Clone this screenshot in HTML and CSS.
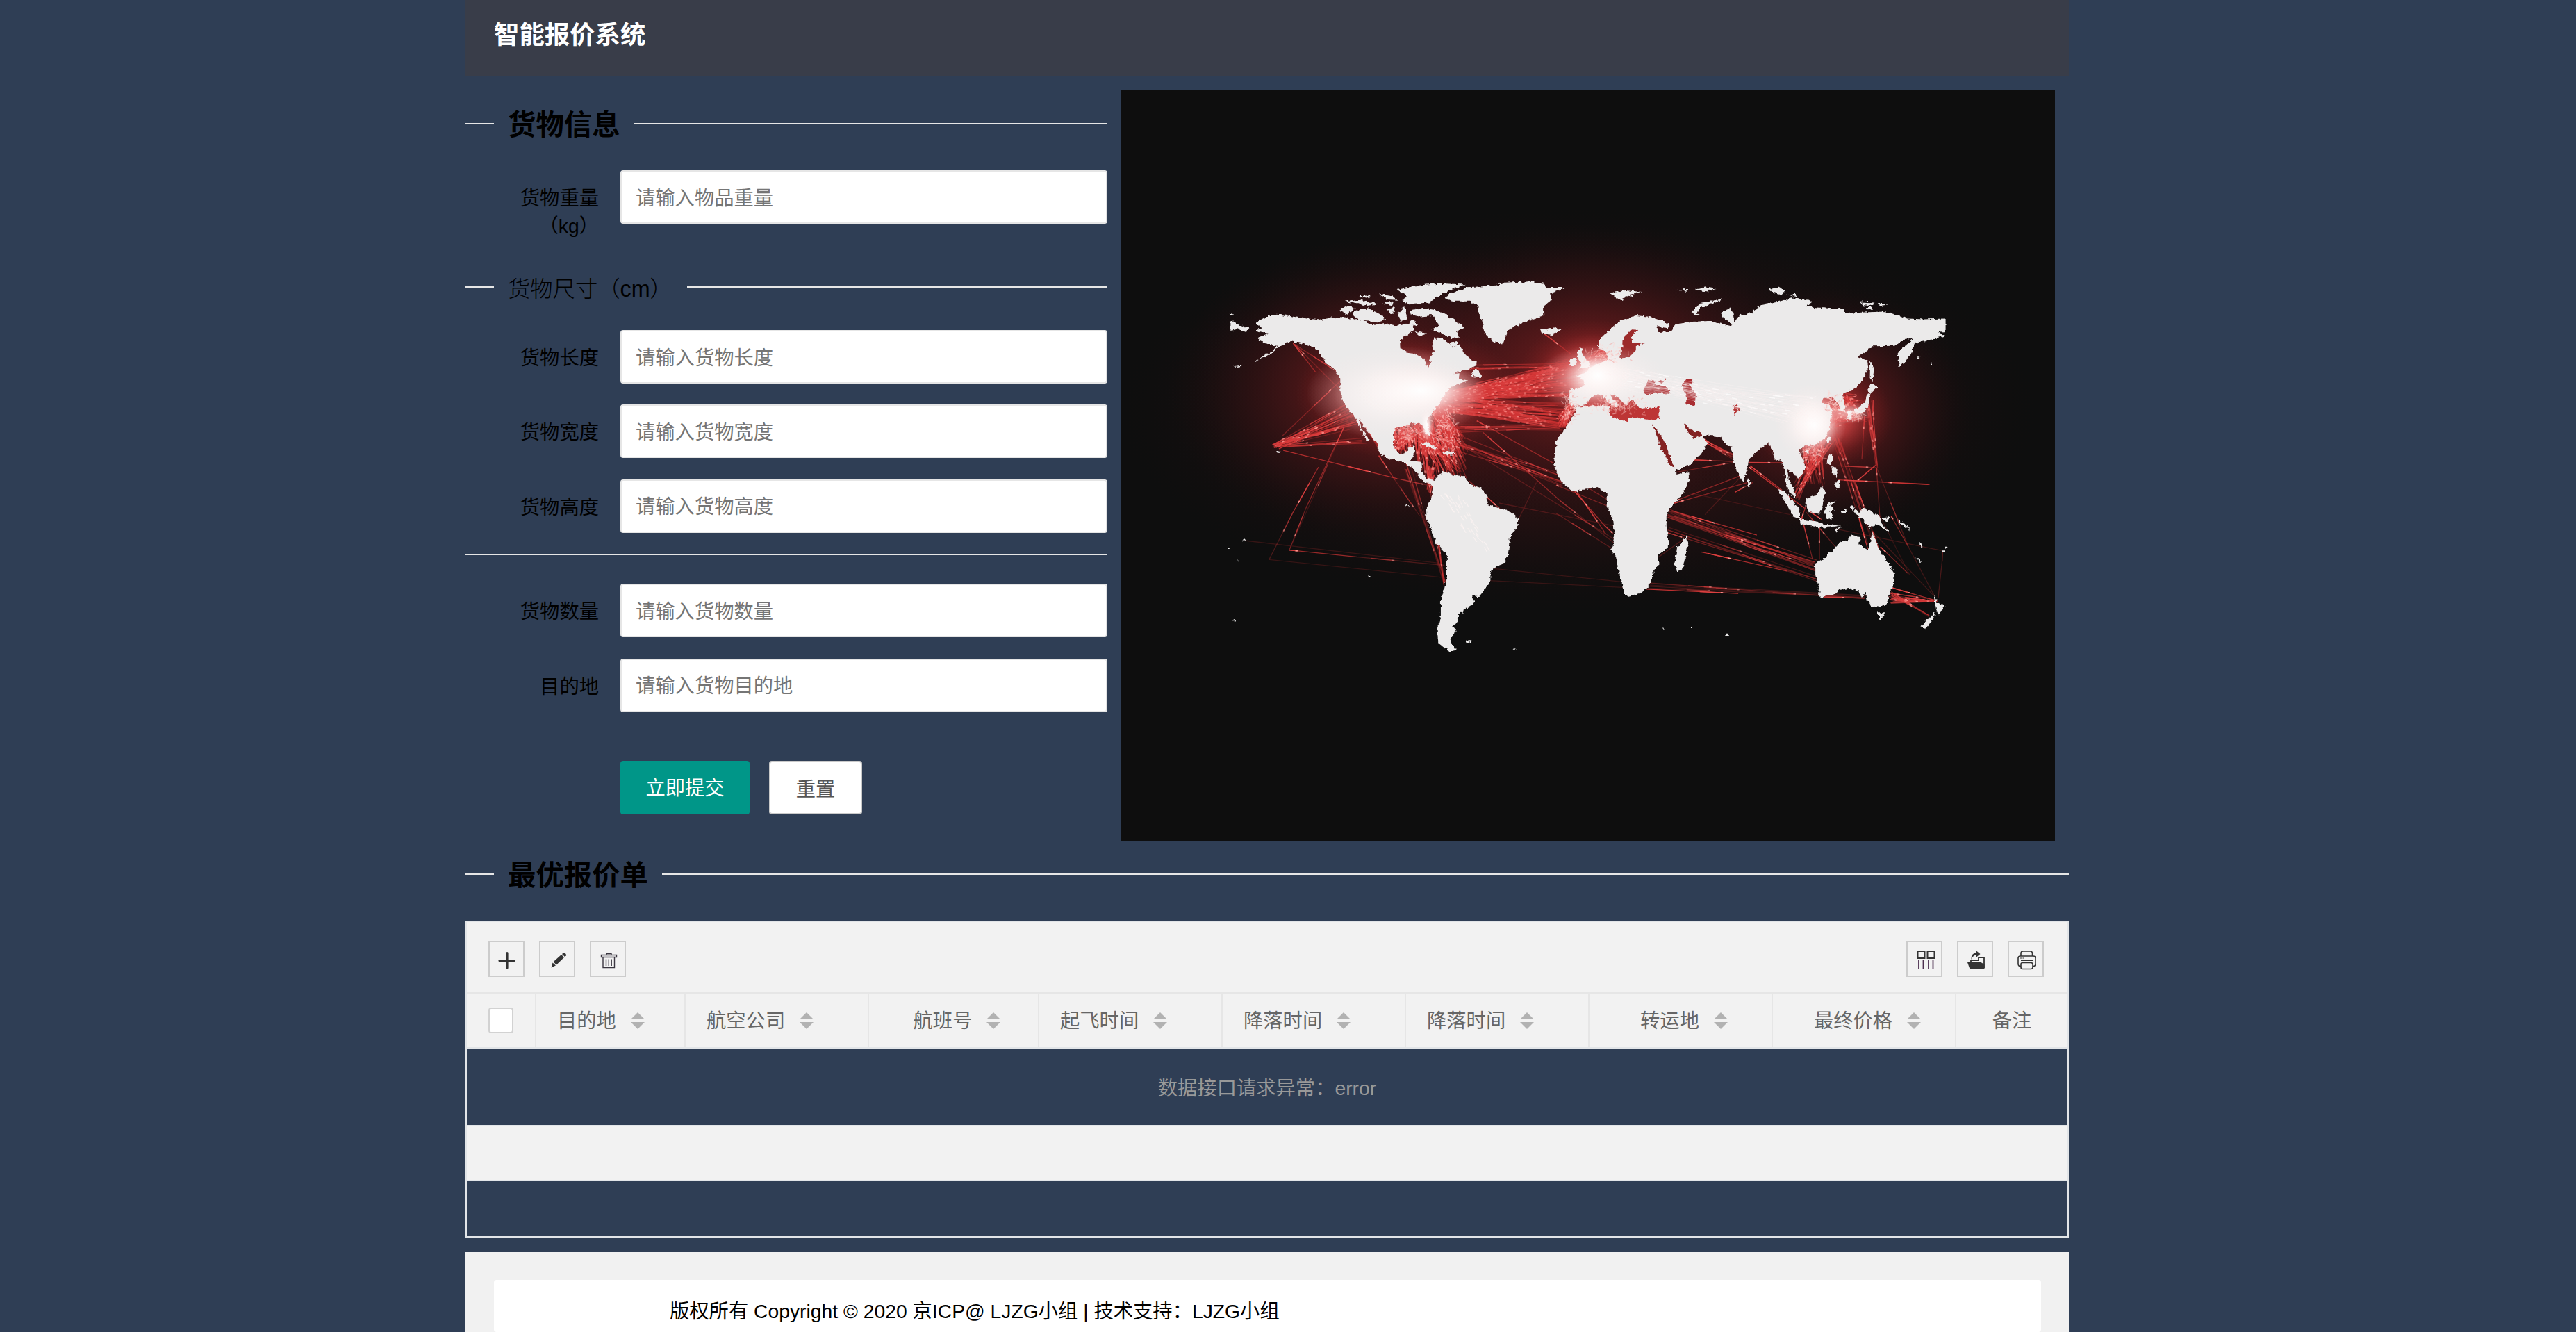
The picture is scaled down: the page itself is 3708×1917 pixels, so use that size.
FILE: index.html
```html
<!DOCTYPE html>
<html lang="zh-CN">
<head>
<meta charset="utf-8">
<title>智能报价系统</title>
<link rel="stylesheet" href="styles.css">
</head>
<body>
<div class="page">
  <header class="header"><h1 class="logo">智能报价系统</h1></header>

  <main class="top">
    <form class="form">
      <div class="legend legend-main"><h2 class="title">货物信息</h2></div>
      <div class="row row-weight"><label class="label">货物重量（kg）</label><input class="input" placeholder="请输入物品重量"></div>
      <div class="legend legend-size"><span class="subtitle">货物尺寸（cm）</span></div>
      <div class="row"><label class="label">货物长度</label><input class="input" placeholder="请输入货物长度"></div>
      <div class="row"><label class="label">货物宽度</label><input class="input" placeholder="请输入货物宽度"></div>
      <div class="row"><label class="label">货物高度</label><input class="input" placeholder="请输入货物高度"></div>
      <div class="divider"></div>
      <div class="row"><label class="label">货物数量</label><input class="input" placeholder="请输入货物数量"></div>
      <div class="row"><label class="label">目的地</label><input class="input" placeholder="请输入货物目的地"></div>
      <div class="actions">
        <button type="button" class="btn btn-primary">立即提交</button>
        <button type="button" class="btn btn-plain">重置</button>
      </div>
    </form>

    <svg class="map" viewBox="1614 130 1344 1081" preserveAspectRatio="none">
      <defs>
        <radialGradient id="haze"><stop offset="0" stop-color="#7a2022" stop-opacity=".9"/><stop offset=".35" stop-color="#5c191b" stop-opacity=".75"/><stop offset=".7" stop-color="#351214" stop-opacity=".45"/><stop offset="1" stop-color="#1a0d0e" stop-opacity="0"/></radialGradient>
        <radialGradient id="hot"><stop offset="0" stop-color="#ff7a74" stop-opacity="1"/><stop offset=".45" stop-color="#e04848" stop-opacity=".6"/><stop offset=".75" stop-color="#b02a2a" stop-opacity=".2"/><stop offset="1" stop-color="#902020" stop-opacity="0"/></radialGradient>
        <radialGradient id="white"><stop offset="0" stop-color="#fff" stop-opacity=".95"/><stop offset=".35" stop-color="#fff8f7" stop-opacity=".75"/><stop offset=".7" stop-color="#fff1f0" stop-opacity=".25"/><stop offset="1" stop-color="#ffecea" stop-opacity="0"/></radialGradient>
        <filter id="coast" x="0" y="0" width="1" height="1"><feTurbulence type="fractalNoise" baseFrequency=".2" numOctaves="2" seed="4"/><feDisplacementMap in="SourceGraphic" scale="6" xChannelSelector="R" yChannelSelector="G"/></filter>
      </defs>
      <rect x="1614" y="130" width="1344" height="1081" fill="#0e0e0e"/>
      <g class="haze">
        <ellipse cx="2270" cy="590" rx="660" ry="290" fill="url(#haze)" opacity=".6"/>
        <ellipse cx="2000" cy="560" rx="320" ry="220" fill="url(#haze)"/>
        <ellipse cx="2290" cy="540" rx="320" ry="220" fill="url(#haze)"/>
        <ellipse cx="2625" cy="590" rx="215" ry="180" fill="url(#haze)"/>
        <ellipse cx="2030" cy="568" rx="165" ry="95" fill="url(#hot)"/>
        <ellipse cx="2295" cy="540" rx="110" ry="80" fill="url(#hot)"/>
        <ellipse cx="2620" cy="600" rx="105" ry="78" fill="url(#hot)"/>
      </g>
      <g id="routes"></g>
      <g filter="url(#coast)">
        <rect x="1614" y="130" width="1344" height="1081" fill="none"/>
        <g class="land" transform="translate(1740 380) scale(.35714 .3699)">
          <path d="M185 258L215 250 190 228 225 208 260 197 300 198 340 205 380 210 440 217 500 208 560 210 620 222 660 238 720 232 760 240 790 232 820 236 830 255 790 280 770 300 772 328 800 345 835 350 865 365 875 390 887 402 895 380 890 362 910 340 900 310 905 288 940 290 965 305 985 325 1010 312 1030 345 1060 375 1080 378 1078 395 1045 410 1000 420 965 440 985 428 1010 425 1008 445 1045 455 1010 465 975 480 955 500 940 525 915 560 890 595 880 610 885 640 893 665 885 672 868 645 860 625 830 618 790 628 750 640 745 665 745 705 765 735 790 740 805 715 830 708 828 735 815 765 855 770 858 805 880 835 905 840 915 845 905 852 870 850 845 825 820 792 790 775 765 765 740 765 700 745 680 722 680 700 655 670 625 632 607 605 610 630 635 665 650 692 635 685 610 640 598 610 580 585 560 560 535 520 530 490 530 445 500 405 470 385 450 350 430 328 400 315 345 303 320 300 290 320 250 348 180 385 215 360 265 332 275 318 240 312 205 298 200 285 240 270Z"/>
          <path d="M1055 435L1075 405 1100 430 1100 445ZM810 180L860 170 920 180 960 200 1000 225 1030 245 1000 262 1008 285 980 290 940 270 900 255 930 240 900 200 850 205 810 195ZM580 185L640 170 690 195 715 215 680 225 620 222 585 205ZM525 180L550 162 590 170 560 195ZM760 100L830 85 920 75 1035 80 990 95 930 120 890 150 800 155 780 140 800 125ZM545 145L600 138 680 155 640 162ZM685 115L740 125 760 140 720 138ZM700 150L745 145 740 160ZM715 175L750 170 740 195ZM760 195L790 165 800 215 775 222ZM830 262L880 270 850 280ZM600 125L650 122 640 135ZM970 305L1000 300 1000 322 975 320ZM800 235L830 215 840 240Z"/>
          <path d="M948 130L985 110 1040 90 1150 85 1190 72 1290 68 1350 78 1360 92 1435 92 1375 115 1380 140 1350 165 1350 200 1270 225 1205 260 1185 312 1145 300 1110 265 1100 215 1085 190 1085 160 1050 145 980 145ZM1335 250L1365 255 1400 245 1418 258 1380 276 1345 270ZM85 222L125 238 165 250 150 265 115 252 85 260ZM83 191L105 197 88 201ZM850 700L880 692 925 722 900 715ZM940 735L965 725 995 740 960 744ZM270 724L287 728 277 735Z"/>
          <path d="M880 840L905 842 925 820 950 808 990 822 1030 825 1055 860 1100 875 1120 900 1125 935 1170 950 1215 962 1247 990 1245 1020 1215 1065 1210 1125 1190 1165 1150 1180 1135 1200 1135 1230 1110 1270 1090 1293 1058 1290 1070 1315 1060 1330 1028 1340 1025 1355 1005 1360 1005 1385 985 1410 997 1425 970 1465 1000 1502 970 1507 925 1475 920 1420 935 1370 935 1310 950 1260 960 1200 960 1130 915 1085 895 1030 878 990 876 950 900 905 905 870ZM1035 1467L1060 1465 1045 1477ZM1224 1494L1238 1500 1230 1500ZM98 398L145 392 120 400ZM790 935L808 940 795 943ZM100 1385h6v6h-6ZM643 1211h5v5h-5ZM78 1103h6v5h-6ZM136 1072h9v5h-9ZM114 1150h5v5h-5Z"/>
        </g>
        <g class="land" transform="translate(2240 380) scale(.38265 .3699)">
          <path d="M50 490L90 480 108 470 100 445 75 435 115 420 130 400 165 385 195 372 185 345 175 330 157 325 157 300 200 255 240 220 300 200 350 205 400 222 428 235 420 250 380 240 385 265 430 262 450 235 500 225 570 222 610 230 650 240 665 235 620 205 625 185 655 172 665 190 670 225 690 200 735 190 770 160 830 148 890 132 965 145 940 165 1050 175 1080 172 1090 192 1160 188 1230 185 1300 203 1320 212 1385 215 1465 212 1465 262 1440 265 1460 280 1420 292 1345 310 1335 350 1300 395 1290 398 1285 350 1300 330 1345 290 1310 295 1270 318 1190 320 1135 362 1170 375 1175 410 1150 455 1120 485 1085 500 1075 520 1090 545 1085 570 1065 570 1060 540 1040 520 1005 518 1000 540 1030 550 1040 570 1030 610 1030 640 1010 680 970 705 935 710 915 720 920 745 938 775 935 810 910 838 895 815 870 800 875 840 895 880 900 912 885 900 865 855 860 800 845 760 825 765 800 695 770 715 725 760 718 800 705 848 690 830 670 780 665 740 660 710 640 705 620 672 550 665 568 700 545 740 510 775 450 803 450 822 500 808 502 830 480 890 435 940 415 980 415 1020 423 1060 423 1100 385 1135 385 1170 365 1195 350 1250 320 1280 270 1292 255 1285 253 1260 235 1200 225 1140 207 1110 220 1055 215 1000 190 940 190 890 155 868 120 875 60 885 25 850 0 810 -8 770 0 690 45 620 75 570 65 552 50 545Z"/>
          <path d="M85 325L105 330 95 350 120 380 130 400 85 408 95 385 80 360ZM50 375L75 362 75 395 50 395ZM508 190L540 155 600 140 632 135 590 152 550 168 530 190 540 200ZM200 112L260 103 320 108 280 118 300 132 265 125 240 140ZM800 98L835 90 862 105 850 118 815 110ZM868 120L900 113 905 128ZM1145 147L1195 150 1190 162 1155 160ZM1210 152L1247 158 1220 162ZM1166 171L1190 169 1185 182ZM455 98L500 97 490 105ZM520 101L560 90 605 97 570 107Z"/>
          <path d="M1182 370L1195 415 1190 460 1180 440ZM1168 494L1188 463 1207 478 1185 500ZM1182 500L1174 555 1150 580 1100 590 1092 575 1130 562 1160 540 1172 505ZM1095 590L1110 585 1107 607 1097 605ZM1025 668L1034 675 1027 700 1018 690ZM930 725L952 720 945 742ZM1023 740L1038 743 1037 780 1018 775ZM1043 857L1065 838 1068 865 1055 875ZM1035 785L1060 800 1055 830 1040 815ZM940 915L975 900 1000 865 1012 885 1002 940 992 972 950 965 940 940ZM833 876L862 885 892 925 918 960 917 992 890 982 855 910ZM915 993L960 998 1005 1013 1070 1018 1000 1027 920 1012ZM1018 935L1057 918 1030 940 1048 955 1033 962 1042 987 1018 992 1010 965ZM1103 938L1125 942 1117 955 1140 965 1160 948 1215 980 1225 1010 1252 1042 1200 1012 1180 1030 1160 1000 1133 977ZM1220 990L1257 983 1240 1002ZM1282 988L1310 1010 1335 1038 1300 1012ZM718 832L733 850 725 870ZM490 1058L497 1085 475 1190 455 1195 445 1165 455 1100 475 1085ZM1070 960L1095 960 1090 968 1070 968ZM1048 1035L1075 1020 1055 1042Z"/>
          <path d="M975 1165L1010 1145 1045 1110 1075 1075 1095 1080 1110 1055 1145 1060 1140 1090 1172 1112 1180 1095 1188 1042 1215 1110 1245 1155 1272 1200 1270 1245 1250 1300 1240 1328 1215 1335 1185 1330 1170 1305 1165 1275 1150 1300 1140 1272 1105 1262 1065 1268 1045 1285 1000 1297 988 1290 990 1265 975 1210ZM1205 1355L1237 1355 1222 1387ZM1420 1288L1440 1320 1462 1328 1440 1364 1430 1345ZM1427 1353L1417 1385 1390 1417 1373 1409 1400 1380ZM1353 1141L1378 1162 1370 1162ZM1453 1112h10v8h-10ZM1462 1102h9v5h-9ZM636 1440h14v6h-14ZM506 1411h5v5h-5ZM401 1417h5v5h-5ZM1370 1085h5v18h-5ZM1358 360h9v7h-9ZM1406 385h9v8h-9Z"/>
        </g>
        <g class="sea" transform="translate(2240 380) scale(.38265 .3699)">
          <path d="M250 290L285 255 307 256 280 285 290 308 337 306 300 320 300 335 275 362 240 366 248 335Z" fill="#9c2a2b"/>
          <path d="M70 556L112 548 125 525 150 508 172 512 205 548 225 555 240 550 205 512 215 505 258 545 268 552 275 535 292 530 305 555 325 562 386 555 385 603 350 606 278 595 268 614 238 605 200 587 195 550 130 552Z" fill="#bd3435"/>
          <path d="M328 490L350 452 370 455 365 472 395 470 430 490 425 505 385 500 340 507ZM383 462L410 444 402 464ZM470 470L490 448 517 448 510 465 497 468 525 505 522 550 490 545 488 510Z" fill="#a92e30"/>
          <path d="M663 555L680 547 694 565 682 570 672 587Z" fill="#b53436"/>
          <path d="M480 620L500 635 520 655 540 653 548 665 520 682 500 660ZM362 625L385 650 415 710 445 795 430 785 395 715Z" fill="#832324"/>
        </g>
      </g>
      <g class="glow">
        <ellipse cx="2010" cy="566" rx="130" ry="68" fill="url(#white)" opacity=".8"/>
        <ellipse cx="2045" cy="562" rx="95" ry="42" fill="url(#white)"/>
        <ellipse cx="2054" cy="612" rx="10" ry="26" fill="url(#white)"/>
        <ellipse cx="2306" cy="546" rx="95" ry="50" fill="url(#white)" opacity=".8"/>
        <ellipse cx="2300" cy="540" rx="48" ry="36" fill="url(#white)"/>
        <ellipse cx="2606" cy="608" rx="52" ry="56" fill="url(#white)"/>
        <ellipse cx="2612" cy="612" rx="34" ry="38" fill="url(#white)" opacity=".8"/>
        <ellipse cx="2662" cy="594" rx="34" ry="16" fill="url(#white)" opacity=".6"/>
      </g>
      <g id="sparks"></g>
    </svg>
  </main>

  <section class="quotes">
    <div class="legend legend-quotes"><h2 class="title">最优报价单</h2></div>
    <div class="table">
      <div class="toolbar">
        <div class="tools">
          <span class="tool"><svg viewBox="0 0 52 52"><path d="M16 28.500H37.500M27 17.500V39" stroke="#333" stroke-width="3.200" stroke-linecap="round"/></svg></span>
          <span class="tool"><svg viewBox="0 0 52 52"><path d="M17.500 38.500L19.500 31.500 24 35.500ZM20.500 30.300L32 20 36 24 25 34.500ZM33 19L34.500 17.800Q37 16.500 38.500 19T38 22L37 23Z" fill="#333"/></svg></span>
          <span class="tool"><svg viewBox="0 0 52 52" fill="none" stroke="#3a3640"><path d="M16.500 20.500H38.500V23.500H16.500ZM19 24V38.500H35.500V24M24 20V18.500H31V20M23.500 26.500V36M27.300 26.500V36M31.200 26.500V36" stroke-width="1.400"/></svg></span>
        </div>
        <div class="tools">
          <span class="tool"><svg viewBox="0 0 52 52" fill="none" stroke="#333"><path d="M16.500 15H26.500V25H16.500ZM30.500 15H40.500V25H30.500Z" stroke-width="2"/><path d="M18 28V40M24.500 28V40M32 28V40M38.500 28V40" stroke="#4d3050" stroke-width="1.800"/></svg></span>
          <span class="tool"><svg viewBox="0 0 52 52"><path d="M20.500 27Q20 17.500 28 17.500V14.500L33.500 19 28 23.500V20.500Q23 20.500 20.500 27Z" fill="#333"/><path d="M20 32V28H31V24H39V39" fill="none" stroke="#333" stroke-width="1.800"/><path d="M15 31H34.500L39.500 34V40.500H18.500Z" fill="#333"/></svg></span>
          <span class="tool"><svg viewBox="0 0 52 52" fill="none" stroke="#333" stroke-width="1.600"><path d="M19 22V18Q19 15 22 15H32.500Q35.500 15 35.500 18V22"/><path d="M19 36.500Q15 37 15 33V25Q15 22 18 22H37Q40 22 40 25V33Q40 37 36 36.500"/><rect x="19" y="31.500" width="17" height="9" rx="2.500"/><path d="M19 28.500H36M18 25H20M21.500 25H23.500" stroke-width="1.200"/></svg></span>
        </div>
      </div>
      <div class="thead">
        <div class="th"><span class="checkbox"></span></div>
        <div class="th">目的地<i class="sort"></i></div>
        <div class="th">航空公司<i class="sort"></i></div>
        <div class="th center">航班号<i class="sort"></i></div>
        <div class="th">起飞时间<i class="sort"></i></div>
        <div class="th">降落时间<i class="sort"></i></div>
        <div class="th">降落时间<i class="sort"></i></div>
        <div class="th center">转运地<i class="sort"></i></div>
        <div class="th center">最终价格<i class="sort"></i></div>
        <div class="th center last">备注</div>
      </div>
      <div class="message">数据接口请求异常：error</div>
      <div class="total"><span class="total-cell"></span></div>
      <div class="pager"></div>
    </div>
  </section>

  <footer class="footer"><div class="card">版权所有 Copyright © 2020 京ICP@ LJZG小组 | 技术支持：LJZG小组</div></footer>
</div>
<script src="map.js"></script>
</body>
</html>
```
FILE: styles.css
```css
* { box-sizing: border-box; }
body {
  margin: 0;
  height: 1917px;
  overflow: hidden;
  background: #2f3e55;
  color: #000;
  font: 28.300px/40px "Liberation Sans", "Noto Sans CJK SC", sans-serif;
}
h1, h2 { margin: 0; }
.page { width: 2308px; margin-left: 670px; }
.header { height: 110px; padding: 26px 0 0 41px; background: #393d49; }
.logo { color: #fff; font-size: 36.400px; line-height: 50px; }

.top { display: flex; justify-content: space-between; padding: 20px 20px 0 0; }
.form { width: 924px; }
.map { display: block; width: 1344px; height: 1081px; }
.land { fill: #ebeaea; }

.legend { display: flex; align-items: center; gap: 20px; }
.legend::before, .legend::after { content: ""; height: 2px; background: #e6e6e6; }
.legend::before { width: 41px; }
.legend::after { flex: 1; }
.legend-main { height: 95px; margin-bottom: 20px; }
.legend-size { height: 62px; margin: 38px 0 31px; }
.legend-quotes { height: 56px; }
.title { font-size: 40.400px; line-height: 48px; padding-top: 4px; }
.subtitle { width: 238px; font-size: 32.300px; font-weight: 300; line-height: 40px; padding-top: 5px; white-space: nowrap; }

.row { display: flex; gap: 31px; height: 77px; margin-bottom: 30.400px; }
.row-weight { height: 99px; margin-bottom: 0; }
.label { width: 192px; padding: 20px 0 0 60px; text-align: right; }
.input {
  flex: 1;
  height: 77px;
  padding: 3px 20px 0;
  border: 2px solid #e6e6e6;
  border-radius: 4px;
  background: #fff;
  font: inherit;
}
.input::placeholder { color: #757575; opacity: 1; }
.divider { height: 2px; margin: 0 0 41px; background: #e6e6e6; }
.actions { display: flex; gap: 28px; padding: 40px 0 0 223px; }
.btn { height: 77px; border-radius: 4px; font: inherit; }
.btn-primary { width: 186px; padding-top: 3px; border: 0; background: #009688; color: #fff; }
.btn-plain { width: 134px; padding-top: 6px; border: 2px solid #c9c9c9; background: #fff; color: #555; }

.quotes { padding-top: 19px; }
.table { height: 456px; margin-top: 39px; border: 2px solid #e2e5e8; }
.toolbar { display: flex; justify-content: space-between; height: 103px; padding: 27px 34px 0 31px; border-bottom: 2px solid #e6e6e6; background: #f2f2f2; }
.tools { display: flex; gap: 21px; }
.tool { width: 52px; height: 52px; border: 2px solid #ccc; }
.tool svg { display: block; width: 52px; height: 52px; margin: -2px; fill: none; }
.thead {
  display: grid;
  grid-template-columns: 100px 215px 264px 245px repeat(5, 264px) 1fr;
  height: 79px;
  border-bottom: 2px solid #e2e5e8;
  background: #f2f2f2;
  color: #666;
}
.th { display: flex; align-items: center; padding: 0 0 0 30px; border-right: 2px solid #e6e6e6; white-space: nowrap; }
.th.center { justify-content: center; padding: 0 0 0 10px; }
.th.last { padding: 0; border: 0; }
.checkbox { width: 36px; height: 37px; margin-left: 1px; border: 2px solid #d2d2d2; border-radius: 4px; background: #fff; }
.sort { display: grid; gap: 4px; margin-left: 21px; }
.sort::before, .sort::after { content: ""; border: 10px solid transparent; }
.sort::before { border-top: 0; border-bottom-color: #b2b2b2; }
.sort::after { border-bottom: 0; border-top-color: #b2b2b2; }
.message { height: 110px; padding-top: 37px; color: #999; text-align: center; }
.total { height: 81px; border: solid #e2e5e8; border-width: 2px 0; background: #f2f2f2; }
.total-cell { display: block; width: 126px; height: 77px; border-right: 4px double #ddd; }

.footer { height: 115px; margin-top: 21px; padding: 40px 40px 0 41px; background: #f1f1f1; }
.card { height: 75px; padding: 25px 0 0 253px; border-radius: 4px; background: #fff; }
```
FILE: map.js
```js
// Flight routes: seeded so that every load draws the same picture.
let seed = 20;
const rnd = () => (seed = (seed * 16807) % 2147483647) / 2147483647;
const NS = 'http://www.w3.org/2000/svg';
const W = (x, y) => [1740 + x * 0.35714, 380 + y * 0.3699];
const E = (x, y) => [2240 + x * 0.38265, 380 + y * 0.3699];

function draw(host, a, b, color, width, opacity) {
  const l = document.createElementNS(NS, 'line');
  [['x1', a[0]], ['y1', a[1]], ['x2', b[0]], ['y2', b[1]], ['stroke', color],
   ['stroke-width', width], ['stroke-opacity', opacity]]
    .forEach(([k, v]) => l.setAttribute(k, typeof v === 'number' ? v.toFixed(2) : v));
  host.appendChild(l);
}
const routes = document.getElementById('routes');
const sparks = document.getElementById('sparks');
const at = (a, b, t) => [a[0] + (b[0] - a[0]) * t, a[1] + (b[1] - a[1]) * t];

function route(a, b, o, n = 1, host = routes) {
  draw(host, a, b, '#d03434', 1.3, o);
  const len = Math.hypot(b[0] - a[0], b[1] - a[1]) || 1;
  for (let i = 0; i < n; i++) {
    const t = rnd() * 0.85;
    draw(host, at(a, b, Math.max(0, t - 30 / len)), at(a, b, t), '#dc4040', 1.5, Math.min(1, o + 0.2));
    draw(host, at(a, b, t), at(a, b, Math.min(1, t + 3.5 / len)), '#ff928c', 1.8, Math.min(1, o + 0.35));
  }
}
function bundle(fn, p, q, count, sp, sq, o, n = 1) {
  for (let i = 0; i < count; i++) {
    const j = s => (rnd() - 0.5) * 2 * s;
    route(fn(p[0] + j(sp[0]), p[1] + j(sp[1])), fn(q[0] + j(sq[0]), q[1] + j(sq[1])), o * (0.6 + rnd() * 0.6), n);
  }
}

// North Atlantic, Caribbean, Hawaii
bundle(W, [960, 515], [1500, 440], 110, [30, 25], [45, 75], 0.4, 3);
bundle(W, [960, 540], [1440, 590], 65, [30, 35], [45, 50], 0.4, 2);
bundle(W, [1010, 405], [1470, 390], 8, [60, 15], [20, 15], 0.3, 1);
bundle(W, [970, 640], [1420, 635], 8, [40, 20], [20, 12], 0.4, 1);
bundle(W, [920, 545], [1000, 750], 100, [25, 30], [45, 85], 0.45, 2);
bundle(W, [870, 650], [930, 780], 80, [45, 40], [95, 70], 0.5, 2);
bundle(W, [790, 640], [780, 725], 60, [60, 25], [45, 20], 0.5, 2);
bundle(W, [890, 790], [890, 880], 16, [20, 30], [12, 35], 0.5, 1);
bundle(W, [270, 710], [580, 585], 22, [14, 9], [30, 60], 0.5, 2);
bundle(W, [290, 710], [640, 685], 5, [10, 4], [30, 15], 0.5, 1);
bundle(W, [620, 610], [690, 720], 6, [8, 12], [12, 10], 0.5, 1);
bundle(W, [1425, 610], [1470, 540], 40, [20, 25], [25, 35], 0.5, 1);
// Europe, East Asia
bundle(E, [190, 370], [270, 330], 50, [40, 20], [45, 18], 0.45, 1);
bundle(E, [120, 380], [190, 330], 30, [20, 15], [15, 12], 0.45, 1);
bundle(E, [970, 700], [950, 820], 45, [45, 25], [60, 60], 0.4, 1);
bundle(E, [1000, 690], [905, 905], 14, [50, 25], [10, 15], 0.5, 2);
bundle(E, [1040, 590], [1140, 575], 36, [20, 45], [40, 40], 0.45, 1);
bundle(E, [1090, 520], [1130, 545], 20, [15, 20], [35, 35], 0.45, 1);
bundle(E, [1175, 530], [1205, 780], 7, [18, 20], [5, 15], 0.4, 2);
bundle(E, [1045, 650], [1190, 1090], 9, [20, 20], [25, 20], 0.22, 1);
// Indian Ocean, Tasman Sea
bundle(E, [420, 975], [975, 1165], 12, [5, 25], [10, 35], 0.36, 1);
bundle(E, [420, 1035], [985, 1225], 4, [5, 12], [5, 12], 0.42, 1);
bundle(E, [340, 1250], [1165, 1298], 5, [20, 15], [20, 8], 0.28, 1);
bundle(E, [1265, 1300], [1430, 1312], 9, [15, 22], [6, 5], 0.5, 2);
bundle(E, [1260, 1280], [1405, 1365], 4, [15, 12], [10, 8], 0.45, 1);
bundle(E, [550, 680], [668, 745], 7, [15, 8], [10, 20], 0.5, 1);
// South Atlantic, Andes
bundle(W, [1010, 700], [1430, 845], 9, [25, 25], [15, 30], 0.36, 1);
bundle(W, [800, 780], [950, 1240], 5, [20, 20], [6, 15], 0.3, 1);
bundle(W, [920, 1060], [948, 1240], 5, [15, 30], [5, 15], 0.45, 1);

const west = [
  [345, 312, 530, 490, .4], [340, 308, 430, 420, .6], [345, 312, 535, 430, .5], [295, 670, 530, 455, .45],
  [300, 725, 760, 835, .8], [760, 835, 880, 860, .3], [685, 745, 750, 840, .6], [750, 840, 850, 980, .3],
  [545, 635, 392, 948, .6], [392, 948, 325, 1112, .4], [530, 670, 325, 1112, .2], [442, 790, 340, 965, .7],
  [340, 965, 243, 1150, .3], [325, 1113, 600, 1140, .7], [600, 1140, 950, 1172, .3], [243, 1150, 950, 1220, .2, 0],
  [145, 1076, 940, 1165, .2, 0], [1350, 270, 1460, 350, .6], [1080, 610, 1390, 775, .6], [1105, 655, 1415, 920, .6],
  [1415, 920, 1640, 1090, .3], [1030, 710, 1700, 1110, .3], [1480, 880, 1600, 1050, .6], [1050, 845, 1180, 958, .7],
  [1170, 930, 1640, 1020, .25, 0], [1320, 850, 1245, 1000, .25, 0], [1150, 1185, 1700, 1240, .2, 0],
  [1130, 1232, 1750, 1262, .2, 0]
];
const east = [
  [10, 800, 190, 915, .5], [0, 860, 190, 940, .5], [70, 885, 180, 1015, .7], [180, 1015, 215, 1050, .5],
  [0, 970, 215, 1110, .35], [725, 790, 935, 950, .9], [730, 785, 850, 880, .8], [725, 772, 855, 773, .6],
  [520, 762, 670, 768, .7], [450, 810, 665, 772, .4], [440, 925, 690, 825, .6], [445, 930, 720, 850, .6],
  [560, 975, 720, 800, .25, 0], [500, 890, 880, 975, .2, 0], [545, 1120, 870, 1195, .8], [340, 1265, 685, 1282, .9],
  [640, 1055, 975, 1160, .7], [435, 960, 755, 1055, .8], [1060, 840, 1405, 857, .8], [1250, 850, 1400, 858, .8],
  [1205, 780, 1125, 850, .6], [1060, 785, 1205, 792, .4], [1160, 590, 1150, 760, .5], [1205, 795, 1218, 990, .45],
  [1218, 980, 1330, 1210, .2, 0], [1110, 850, 1145, 965, .6], [1125, 850, 1160, 950, .7], [1140, 990, 1172, 1108, .8],
  [1205, 790, 1325, 1100, .3], [1260, 980, 1325, 1100, .6], [1325, 1100, 1425, 1295, .25, 0], [1190, 1040, 1420, 1290, .25, 0],
  [1220, 1100, 1325, 1205, .6], [1453, 1120, 1452, 1155, .7, 0], [1452, 1155, 1437, 1300, .3, 0],
  [1050, 1030, 1450, 1115, .25, 0], [990, 1030, 990, 1150, .6], [925, 990, 965, 1150, .5], [940, 965, 1050, 1100, .4],
  [1190, 1040, 1225, 1140, .8], [950, 960, 1000, 995, .7], [1265, 1260, 1425, 1308, .8], [1005, 1295, 1160, 1300, .6],
  [672, 888, 740, 850, .5], [385, 1140, 480, 1070, .3, 0], [920, 1000, 940, 940, .7]
];
west.forEach(r => route(W(r[0], r[1]), W(r[2], r[3]), r[4], r[5] ?? 1));
east.forEach(r => route(E(r[0], r[1]), E(r[2], r[3]), r[4], r[5] ?? 1));

// Pale traces that cross the land
for (let i = 0; i < 55; i++) {
  const a = E(180 + rnd() * 150, 400 + rnd() * 90), b = E(850 + rnd() * 150, 500 + rnd() * 120);
  const t = rnd();
  draw(sparks, a, b, '#fff4f3', 1, 0.2);
  draw(sparks, at(a, b, t), at(a, b, Math.min(1, t + 0.03)), '#ffffff', 1.5, 0.6);
}
for (let i = 0; i < 40; i++) {
  const a = W(900 + rnd() * 110, 850 + rnd() * 60), b = W(1100 + rnd() * 60, 1080 + rnd() * 80);
  const t = rnd() * 0.9;
  draw(sparks, at(a, b, t), at(a, b, t + 0.07), '#fff5f4', 1.3, 0.6);
}
const dot = (fn, x, y, sx, sy, n) => {
  for (let i = 0; i < n; i++) {
    const p = fn(x + (rnd() + rnd() - 1) * sx, y + (rnd() + rnd() - 1) * sy);
    const k = rnd() * 6.283, r = 3 + rnd() * 5;
    draw(sparks, p, [p[0] + Math.cos(k) * r, p[1] + Math.sin(k) * r], rnd() > 0.4 ? '#ffd5d2' : '#f3a09c', 1.2, 0.5);
  }
};
dot(W, 955, 650, 60, 100, 120);
dot(W, 805, 660, 55, 40, 60);
dot(E, 215, 550, 130, 40, 110);
dot(E, 195, 345, 90, 35, 60);
dot(E, 1045, 545, 35, 45, 60);
dot(E, 970, 735, 50, 35, 40);
dot(E, 1130, 590, 45, 25, 40);
dot(W, 1450, 560, 40, 75, 70);
```
